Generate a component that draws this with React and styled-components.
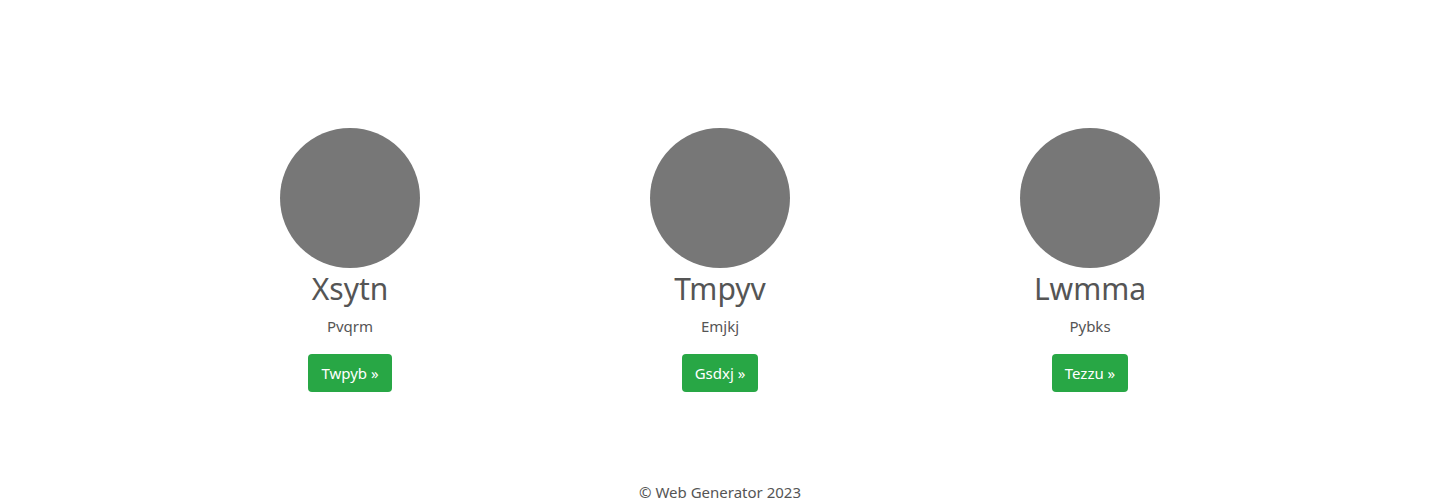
import React from 'react';
import styled, {createGlobalStyle} from 'styled-components';

const GlobalStyle = createGlobalStyle`
body {
    margin: 0;
    font-family: "Noto Sans", "Open Sans", sans-serif;
    color: #555;
    background: #fff;
}
`;

const Page = styled.div`
    display: flex;
    flex-direction: column;
    align-items: center;
    min-height: 504px;
`;
const Row = styled.div`
    display: grid;
    grid-template-columns: repeat(3, 370px);
    width: 1110px;
    padding-top: 128px;
`;
const Col = styled.div`
    display: flex;
    flex-direction: column;
    align-items: center;
    text-align: center;
`;
const Avatar = styled.div`
    width: 140px;
    height: 140px;
    border-radius: 50%;
    background-color: #777;
`;
const Name = styled.h2`
    margin: 2px 0 7px;
    font-size: 30px;
    font-weight: 400;
    line-height: 37px;
    color: #555;
`;
const Text = styled.p`
    margin: 0 0 16px;
    font-size: 15px;
    line-height: 24px;
`;
const Button = styled.a`
    display: inline-block;
    padding: 6px 13px;
    font-size: 15px;
    line-height: 26px;
    color: #fff;
    background-color: #28a745;
    border-radius: 4px;
    text-decoration: none;
`;
const Footer = styled.footer`
    margin-top: auto;
    font-size: 15px;
    line-height: 24px;
    text-align: center;
`;

const people = [
    {name: 'Xsytn', text: 'Pvqrm', link: 'Twpyb'},
    {name: 'Tmpyv', text: 'Emjkj', link: 'Gsdxj'},
    {name: 'Lwmma', text: 'Pybks', link: 'Tezzu'},
];

export default function App() {
    return (
        <Page>
            <GlobalStyle/>
            <Row>
                {people.map(p => (
                    <Col key={p.name}>
                        <Avatar/>
                        <Name>{p.name}</Name>
                        <Text>{p.text}</Text>
                        <Button href="#">{p.link} &raquo;</Button>
                    </Col>
                ))}
            </Row>
            <Footer>&copy; Web Generator 2023</Footer>
        </Page>
    );
}
